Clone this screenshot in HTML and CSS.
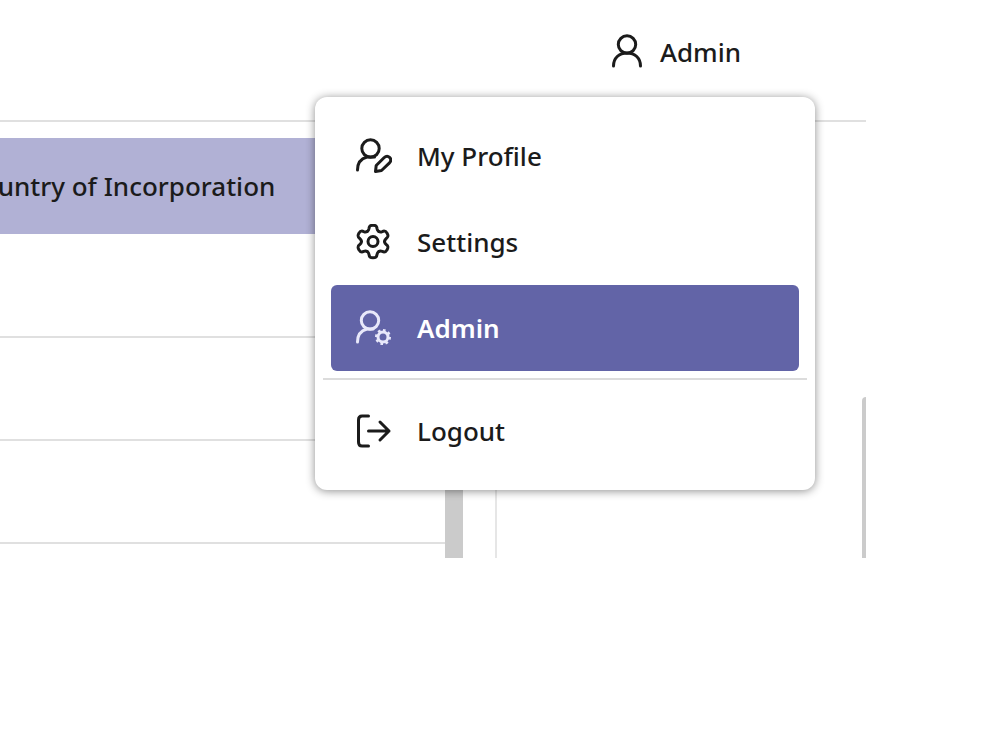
FILE: index.html
```
<!DOCTYPE html>
<html lang="en">
<head>
    <meta charset="UTF-8">
    <meta name="viewport" content="width=device-width, initial-scale=1.0">
    <title>Admin</title>
    <link rel="stylesheet" href="styles.css">
</head>
<body>
    <div class="app">
        <!-- Top bar -->
        <header class="topbar">
            <div class="account">
                <button class="account-button" type="button" aria-haspopup="true" aria-expanded="true">
                    <svg class="icon" viewBox="0 0 36 36" aria-hidden="true">
                        <circle cx="18" cy="10.5" r="8.7"/>
                        <path d="M4.500 32C4.500 24 10 19 18 19S31.500 24 31.500 32"/>
                    </svg>
                    Admin
                </button>

                <!-- Account menu -->
                <nav class="menu">
                    <a class="menu-item" href="#profile">
                        <svg class="icon" viewBox="0 0 36 36" aria-hidden="true">
                            <circle cx="14.5" cy="10.5" r="8.7"/>
                            <path d="M1.500 32C1.500 25 5.500 20.500 11 19H18.500"/>
                            <path d="M19.500 33.500L20.200 27.500L28 19.800C32 16 37 20.800 33.500 24.800L25.500 32.500Z"/>
                        </svg>
                        My Profile
                    </a>
                    <a class="menu-item" href="#settings">
                        <svg class="icon" viewBox="-17 -17.5 36 36" aria-hidden="true">
                            <defs>
                                <path id="tooth" d="M-5.800 -10C-4.600 -10.700 -4.200 -11.600 -4 -13C-3.700 -15.800 -2.600 -16.300 0 -16.300S3.700 -15.800 4 -13C4.200 -11.600 4.600 -10.700 5.800 -10"/>
                            </defs>
                            <circle r="5"/>
                            <use href="#tooth"/>
                            <use href="#tooth" transform="rotate(60)"/>
                            <use href="#tooth" transform="rotate(120)"/>
                            <use href="#tooth" transform="rotate(180)"/>
                            <use href="#tooth" transform="rotate(240)"/>
                            <use href="#tooth" transform="rotate(300)"/>
                        </svg>
                        Settings
                    </a>
                    <a class="menu-item active" href="#admin">
                        <svg class="icon" viewBox="0 0 36 36" aria-hidden="true">
                            <circle cx="14" cy="10.5" r="8.7"/>
                            <path d="M1.500 32C1.500 25 5.500 20.500 11 19H17"/>
                            <circle cx="27" cy="27" r="5"/>
                            <circle class="teeth" cx="27" cy="27" r="6.5" pathLength="48"/>
                        </svg>
                        Admin
                    </a>
                    <hr class="menu-divider">
                    <a class="menu-item" href="#logout">
                        <svg class="icon" viewBox="0 0 36 36" aria-hidden="true">
                            <path d="M12.500 3H6Q2.500 3 2.500 7V29Q2.500 33 6 33H12.500"/>
                            <path d="M12.500 18H33M24 9L33 18L24 27"/>
                        </svg>
                        Logout
                    </a>
                </nav>
            </div>
        </header>

        <!-- Content -->
        <main class="content">
            <section class="list">
                <div class="list-view">
                    <table class="companies">
                        <thead>
                            <tr><th>Country of Incorporation</th></tr>
                        </thead>
                        <tbody>
                            <tr><td></td></tr>
                            <tr><td></td></tr>
                            <tr><td></td></tr>
                        </tbody>
                    </table>
                </div>
                <div class="list-scrollbar"></div>
            </section>
            <section class="details">
                <div class="details-scrollbar"></div>
            </section>
        </main>
    </div>
</body>
</html>
```

FILE: styles.css
```
* {
    box-sizing: border-box;
}
body {
    margin: 0;
    padding-right: 134px;
    background-color: #fff;
    color: #1b1b1b;
    font-family: "Segoe UI", "Noto Sans", sans-serif;
    font-size: 26px;
    font-weight: 500;
    line-height: 36px;
}
.icon {
    width: 36px;
    height: 36px;
    flex: none;
    fill: none;
    stroke: currentColor;
    stroke-width: 3;
    stroke-linecap: round;
    stroke-linejoin: round;
}

/* Top bar */
.topbar {
    display: flex;
    justify-content: flex-end;
    padding: 34px 125px 50px 0;
    border-bottom: 2px solid #e0e0e0;
}
.account {
    position: relative;
}
.account-button {
    display: flex;
    align-items: center;
    gap: 15px;
    padding: 0;
    border: none;
    background: none;
    color: inherit;
    font: inherit;
    cursor: pointer;
}

/* Account menu */
.menu {
    position: absolute;
    top: calc(100% + 27px);
    right: -74px;
    width: 500px;
    padding: 16px 8px;
    border-radius: 12px;
    background-color: #fff;
    box-shadow: 0 1px 10px rgba(0, 0, 0, 0.45);
}
.menu-item {
    display: flex;
    align-items: center;
    gap: 25px;
    height: 86px;
    margin: 0 8px;
    padding: 0 25px;
    border-radius: 6px;
    color: inherit;
    text-decoration: none;
}
.menu-item.active {
    background-color: #6264a7;
    color: #fff;
    font-weight: 600;
}
.menu-item.active .icon {
    stroke: #e8e8fa;
}
.icon .teeth {
    stroke-width: 3;
    stroke-linecap: butt;
    stroke-dasharray: 3 3;
}
.menu-divider {
    margin: 7px 0 8px;
    border: none;
    border-top: 2px solid #dcdcdc;
}

/* Content */
.content {
    display: grid;
    grid-template-columns: 5fr 4fr;
    gap: 32px;
    padding-top: 16px;
}
.list {
    display: flex;
    min-width: 0;
}
.list-view {
    display: flex;
    flex: 1;
    justify-content: flex-end;
    overflow: hidden;
    padding-bottom: 14px;
}
.list-scrollbar {
    width: 18px;
    background-color: #cbcbcb;
}
.companies {
    flex: none;
    border-collapse: collapse;
}
.companies th {
    height: 96px;
    padding: 0 170px 0 24px;
    background-color: #b1b1d5;
    font-weight: 500;
    text-align: right;
    white-space: nowrap;
}
.companies td {
    height: 103px;
    padding: 0;
    border-bottom: 2px solid #e0e0e0;
}
.details {
    display: flex;
    justify-content: flex-end;
    border-left: 2px solid #e6e6e6;
}
.details-scrollbar {
    width: 4px;
    margin-top: 259px;
    border-top-left-radius: 4px;
    background-color: #cbcbcb;
}
```
